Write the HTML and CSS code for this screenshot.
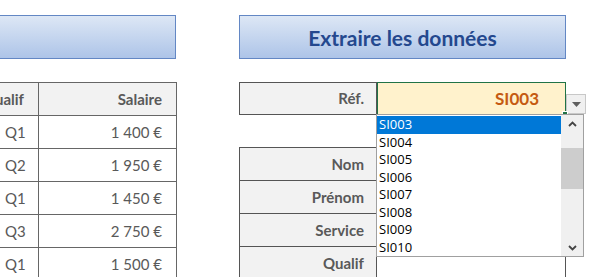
FILE: index.html
```html
<!DOCTYPE html>
<html lang="fr">
  <head>
    <meta charset="UTF-8" />
    <title>Extraire les données</title>
    <link rel="stylesheet" href="styles.css">
  </head>
  <body>
    <div class="sheet">
      <!-- Bloc de gauche : base de données -->
      <section class="left">
        <div class="btn"></div>
        <table class="data">
          <colgroup><col class="c-q"><col class="c-s"></colgroup>
          <tr class="head"><th class="q">Qualif</th><th>Salaire</th></tr>
          <tr><td class="q">Q1</td><td>1 400 €</td></tr>
          <tr><td class="q">Q2</td><td>1 950 €</td></tr>
          <tr><td class="q">Q1</td><td>1 450 €</td></tr>
          <tr><td class="q">Q3</td><td>2 750 €</td></tr>
          <tr><td class="q">Q1</td><td>1 500 €</td></tr>
        </table>
      </section>

      <!-- Bloc de droite : extraction -->
      <section class="right">
        <div class="btn">Extraire les données</div>

        <div class="ref-row">
          <div class="label">Réf.</div>
          <div class="ref-cell">SI003<span class="handle"></span></div>
          <div class="drop-btn">
            <svg width="9" height="5" viewBox="0 0 9 5"><path d="M0 0h9L4.5 5z" fill="#5f5f5f"/></svg>
          </div>

          <!-- Liste de validation ouverte -->
          <div class="list">
            <ul class="items">
              <li class="sel">SI003</li>
              <li>SI004</li>
              <li>SI005</li>
              <li>SI006</li>
              <li>SI007</li>
              <li>SI008</li>
              <li>SI009</li>
              <li>SI010</li>
            </ul>
            <div class="scroll">
              <div class="arrow">
                <svg width="9" height="6" viewBox="0 0 9 6"><path d="M1 5l3.5-3.5L8 5" fill="none" stroke="#444" stroke-width="1.8"/></svg>
              </div>
              <div class="track"><div class="thumb"></div></div>
              <div class="arrow">
                <svg width="9" height="6" viewBox="0 0 9 6"><path d="M1 1l3.5 3.5L8 1" fill="none" stroke="#444" stroke-width="1.8"/></svg>
              </div>
            </div>
          </div>
        </div>

        <table class="fields">
          <tr><td class="label">Nom</td><td class="val"></td></tr>
          <tr><td class="label">Prénom</td><td class="val"></td></tr>
          <tr><td class="label">Service</td><td class="val"></td></tr>
          <tr><td class="label">Qualif</td><td class="val"></td></tr>
        </table>
      </section>
    </div>
  </body>
</html>
```

FILE: styles.css
```css
/* Feuille de calcul */
body {
  margin: 0;
  width: 600px;
  height: 277px;
  overflow: hidden;
  background: #fff;
  font-family: Lato, "Open Sans", sans-serif;
  color: #595959;
}

.sheet {
  display: flex;
  padding-top: 15px;
}

/* Boutons bleus */
.btn {
  height: 42px;
  border: 1px solid #6387c4;
  background: linear-gradient(#dde7f5, #adc4e8);
  color: #24488e;
  font-weight: bold;
  font-size: 21px;
  display: flex;
  align-items: center;
  justify-content: center;
}

.left {
  flex-shrink: 0;
  width: 200px;
  margin-left: -24px;
}

.right {
  flex-shrink: 0;
  width: 347px;
  margin-left: 63px;
}

.right .btn {
  width: 325px;
}

/* Tableau de gauche */
.data {
  margin-top: 23px;
  border-collapse: collapse;
  table-layout: fixed;
  width: 200px;
  font-size: 15px;
}

.c-q { width: 62px; }
.c-s { width: 138px; }

.data th,
.data td {
  height: 32px;
  padding: 0 14px 0 0;
  border: 1px solid #666;
  text-align: right;
  white-space: nowrap;
}

.data th {
  background: #f2f2f2;
  font-weight: bold;
}

.data td.q {
  text-align: left;
  padding-left: 28px;
  padding-right: 0;
}

/* Ligne Réf. */
.ref-row {
  position: relative;
  display: flex;
  margin-top: 23px;
  height: 33px;
}

.label {
  flex-shrink: 0;
  width: 124px;
  background: #f2f2f2;
  border: 1px solid #555;
  font-weight: bold;
  font-size: 15px;
  text-align: right;
  padding-right: 12px;
  line-height: 31px;
}

.ref-cell {
  flex-shrink: 0;
  position: relative;
  width: 161px;
  background: #fff2cc;
  border: 1px solid #217346;
  color: #c55a11;
  font-weight: bold;
  font-size: 17px;
  text-align: right;
  padding-right: 26px;
  line-height: 31px;
}

/* Poignée de recopie */
.handle {
  position: absolute;
  right: -3px;
  bottom: -3px;
  width: 4px;
  height: 4px;
  background: #217346;
  border: 1px solid #fff;
}

.drop-btn {
  flex-shrink: 0;
  width: 18px;
  height: 18px;
  margin-top: 12px;
  background: #f0f0f0;
  border: 1px solid #c8c8c8;
  display: flex;
  align-items: center;
  justify-content: center;
}

/* Liste déroulante */
.list {
  position: absolute;
  left: 137px;
  top: 32px;
  width: 206px;
  height: 141px;
  background: #fff;
  border: 1px solid #a0a0a0;
  display: flex;
  z-index: 2;
}

.items {
  list-style: none;
  margin: 0;
  padding: 1px 0 0;
  flex: 1;
  font-family: "Open Sans", sans-serif;
  font-size: 13px;
  color: #000;
}

.items li {
  height: 17.5px;
  line-height: 17.5px;
  padding-left: 2px;
}

.items li.sel {
  background: #0078d7;
  color: #fff;
}

.scroll {
  width: 22px;
  background: #f0f0f0;
  display: flex;
  flex-direction: column;
}

.arrow {
  height: 17px;
  display: flex;
  align-items: center;
  justify-content: center;
}

.track {
  flex: 1;
  padding-top: 16px;
}

.thumb {
  height: 41px;
  background: #cdcdcd;
}

/* Champs extraits */
.fields {
  margin-top: 32px;
  border-collapse: collapse;
}

.fields td {
  height: 32px;
  padding: 0;
}

.fields .label {
  display: table-cell;
  width: 124px;
  padding-right: 12px;
}

.fields .val {
  width: 188px;
  border: 1px solid #555;
}
```
